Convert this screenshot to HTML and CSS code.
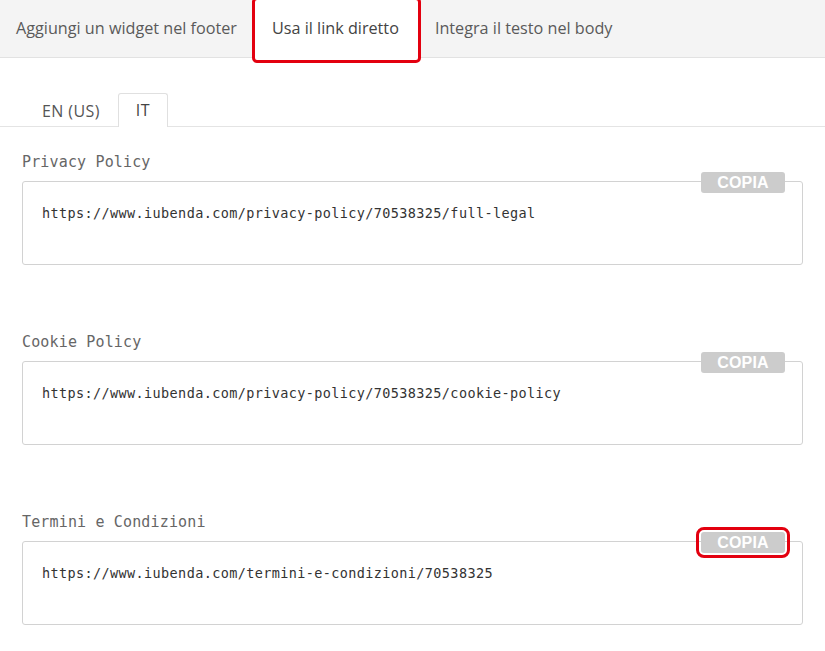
FILE: index.html
```html
<!DOCTYPE html>
<html lang="it">
<head>
<meta charset="utf-8">
<title>Link diretto</title>
<link rel="stylesheet" href="styles.css">
</head>
<body>
<div class="tabbar">
  <div class="tab">Aggiungi un widget nel footer</div>
  <div class="tab tab-active">Usa il link diretto</div>
  <div class="tab tab-last">Integra il testo nel body</div>
</div>
<div class="subtabs">
  <div class="subtab">EN (US)</div>
  <div class="subtab subtab-active">IT</div>
</div>
<div class="content">
  <section class="field">
    <div class="label">Privacy Policy</div>
    <div class="box">
      <button class="copy">COPIA</button>
      <div class="url">https://www.iubenda.com/privacy-policy/70538325/full-legal</div>
    </div>
  </section>
  <section class="field">
    <div class="label">Cookie Policy</div>
    <div class="box">
      <button class="copy">COPIA</button>
      <div class="url">https://www.iubenda.com/privacy-policy/70538325/cookie-policy</div>
    </div>
  </section>
  <section class="field">
    <div class="label">Termini e Condizioni</div>
    <div class="box">
      <button class="copy copy-highlight">COPIA</button>
      <div class="url">https://www.iubenda.com/termini-e-condizioni/70538325</div>
    </div>
  </section>
</div>
</body>
</html>
```
FILE: styles.css
```css
html, body {
  margin: 0;
  padding: 0;
  background: #fff;
}
body {
  font-family: "Open Sans", "Liberation Sans", sans-serif;
  width: 825px;
  height: 651px;
  overflow: hidden;
}
.tabbar {
  display: flex;
  align-items: flex-start;
  height: 57px;
  background: #f4f4f4;
  border-bottom: 1px solid #e2e2e2;
}
.tab {
  height: 57px;
  line-height: 57px;
  padding: 0 16px;
  font-size: 16.2px;
  color: #5a5a5a;
  white-space: nowrap;
}
.tab:first-child {
  padding-right: 15px;
}
.tab-active {
  position: relative;
  z-index: 1;
  margin-top: -3px;
  height: 60px;
  line-height: 56px;
  padding: 0 19px 0 17px;
  background: #fff;
  color: #444;
  border: 3px solid #e3000f;
  border-radius: 5px;
}
.tab-last {
  padding-left: 14px;
}
.subtabs {
  display: flex;
  align-items: flex-end;
  margin-top: 35px;
  padding-left: 24px;
  border-bottom: 1px solid #e4e4e4;
}
.subtab {
  height: 32px;
  line-height: 32px;
  padding: 0 17px;
  font-size: 16px;
  letter-spacing: 0.4px;
  color: #555;
  border: 1px solid transparent;
  border-bottom: none;
  margin-bottom: -1px;
}
.subtab-active {
  background: #fff;
  border-color: #e0e0e0;
  border-radius: 3px 3px 0 0;
  height: 33px;
  color: #444;
}
.content {
  padding: 0 22px;
}
.field {
  margin-top: 25px;
}
.field + .field {
  margin-top: 67px;
}
.label {
  font-family: "DejaVu Sans Mono", "Liberation Mono", monospace;
  font-size: 15px;
  line-height: 20px;
  color: #666;
  letter-spacing: 0.15px;
  margin-bottom: 9px;
}
.box {
  position: relative;
  height: 82px;
  border: 1px solid #d2d2d2;
  border-radius: 3px;
  box-sizing: content-box;
}
.url {
  padding: 22px 0 0 19px;
  font-family: "DejaVu Sans Mono", "Liberation Mono", monospace;
  font-size: 13.5px;
  line-height: 18px;
  letter-spacing: 0.38px;
  color: #333;
}
.copy {
  position: absolute;
  top: -10px;
  right: 17px;
  width: 84px;
  height: 21px;
  padding: 0;
  border: none;
  border-radius: 3px;
  background: #cccccc;
  color: #fff;
  font-family: "Liberation Sans", Arial, sans-serif;
  font-size: 16px;
  font-weight: 700;
  line-height: 21px;
  text-align: center;
  letter-spacing: 0.2px;
}
.copy-highlight {
  outline: 3px solid #e3000f;
  outline-offset: 2px;
}
```
